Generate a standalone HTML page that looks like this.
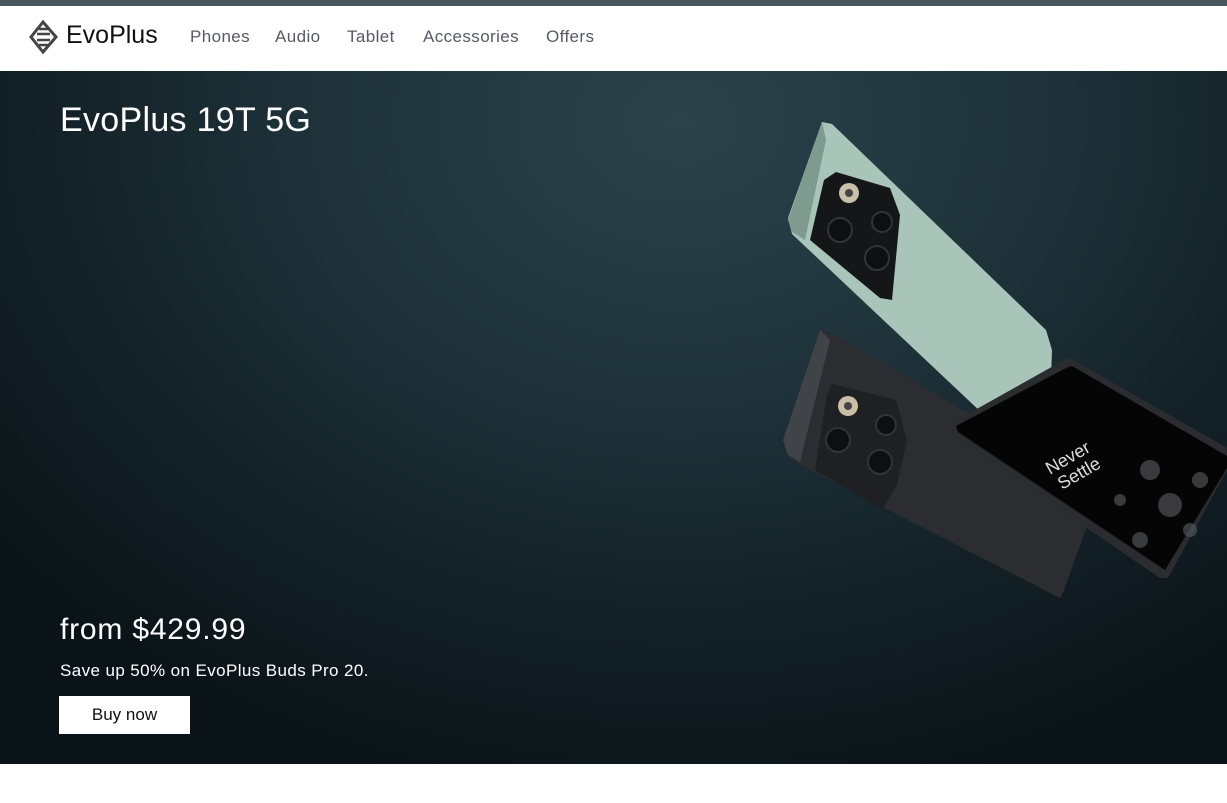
<!DOCTYPE html>
<html><head><meta charset="utf-8"><style>
*{margin:0;padding:0;box-sizing:border-box}
body{width:1227px;height:803px;background:#fff;font-family:"Liberation Sans",sans-serif;overflow:hidden;position:relative}
.top{height:6px;background:#47555f}
nav{height:65px;position:relative}
.logo{position:absolute;left:28px;top:13px}
.brand{position:absolute;left:66px;top:15px;font-size:25px;color:#111}
.links{position:absolute;top:21px;font-size:17px;color:#555a66;letter-spacing:0.4px}
.hero{position:absolute;left:0;top:71px;width:1227px;height:693px;background:radial-gradient(ellipse 900px 700px at 680px 50px,#2b424b 0%,#1f323a 40%,#132127 70%,#0a1317 100%)}
h1{position:absolute;left:60px;top:101px;font-weight:normal;color:#fff;font-size:34px;letter-spacing:0.3px}
.price{position:absolute;left:60px;top:613px;color:#fff;font-size:30px;letter-spacing:0.8px}
.save{position:absolute;left:60px;top:661px;color:#fff;font-size:17px;letter-spacing:0.4px}
.btn{position:absolute;left:59px;top:696px;width:131px;height:38px;background:#fff;color:#111;font-size:17px;text-align:center;line-height:38px}
</style></head><body>
<div class="top"></div>
<nav>
<svg class="logo" width="32" height="36" viewBox="0 0 32 36"><g fill="none" stroke="#444" stroke-width="3"><path d="M15 3 L3 18 L15 33 L28 18 Z"/><path d="M11 10 L20 10 M9 15 L22 15 M9 21 L22 21 M11 26 L20 26" stroke-width="2.5"/></g></svg>
<div class="brand">EvoPlus</div>
<div class="links" style="left:190px">Phones</div>
<div class="links" style="left:275px">Audio</div>
<div class="links" style="left:347px">Tablet</div>
<div class="links" style="left:423px">Accessories</div>
<div class="links" style="left:546px">Offers</div>
</nav>
<div class="hero"></div>
<svg style="position:absolute;left:0;top:0" width="1227" height="803">
<polygon points="822,122 832,124 1046,330 1052,350 1050,410 1000,430 792,234 788,218" fill="#a9c4b8"/>
<polygon points="822,122 788,220 792,232 805,240 826,140" fill="#7f9a8f"/>
<polygon points="836,172 890,188 900,215 892,300 880,298 810,240 824,180" fill="#141618"/>
<circle cx="849" cy="193" r="10" fill="#c9c0aa"/><circle cx="849" cy="193" r="4" fill="#444"/>
<circle cx="840" cy="230" r="12" fill="#0d0f11" stroke="#333" stroke-width="2"/>
<circle cx="882" cy="222" r="10" fill="#0d0f11" stroke="#333" stroke-width="2"/>
<circle cx="877" cy="258" r="12" fill="#0d0f11" stroke="#333" stroke-width="2"/>
<polygon points="820,330 832,333 1100,490 1064,590 1060,598 795,462 785,452 783,440" fill="#2b2d30"/>
<polygon points="820,330 783,440 788,455 800,462 830,340" fill="#404347"/>
<polygon points="832,384 896,400 907,440 897,485 882,510 815,470 827,395" fill="#1e2023"/>
<circle cx="848" cy="406" r="10" fill="#cbbfa8"/><circle cx="848" cy="406" r="4" fill="#444"/>
<circle cx="838" cy="440" r="12" fill="#0d0f11" stroke="#333" stroke-width="2"/>
<circle cx="886" cy="425" r="10" fill="#0d0f11" stroke="#333" stroke-width="2"/>
<circle cx="880" cy="462" r="12" fill="#0d0f11" stroke="#333" stroke-width="2"/>
<polygon points="1070,358 1227,448 1227,470 1168,578 1160,578 952,436 950,424 1064,360" fill="#2a2c30"/>
<polygon points="1072,366 1227,456 1227,468 1165,570 958,432 956,426 1066,368" fill="#050506"/>
<g fill="#5a5e64" opacity="0.6"><circle cx="1150" cy="470" r="10"/><circle cx="1170" cy="505" r="12"/><circle cx="1140" cy="540" r="8"/><circle cx="1200" cy="480" r="8"/><circle cx="1190" cy="530" r="7"/><circle cx="1120" cy="500" r="6"/></g>
<text x="0" y="0" transform="translate(1050,475) rotate(-30)" fill="#ddd" font-family="Liberation Sans" font-size="18">Never</text>
<text x="0" y="0" transform="translate(1062,490) rotate(-30)" fill="#ddd" font-family="Liberation Sans" font-size="18">Settle</text>
</svg>
<h1>EvoPlus 19T 5G</h1>
<div class="price">from $429.99</div>
<div class="save">Save up 50% on EvoPlus Buds Pro 20.</div>
<div class="btn">Buy now</div>
</body></html>
